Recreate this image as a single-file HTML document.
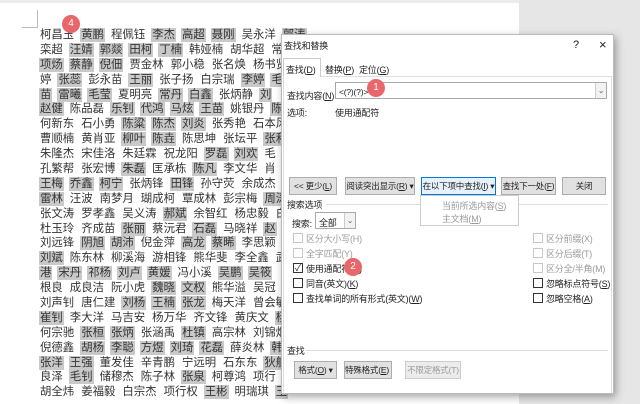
<!DOCTYPE html>
<html><head><meta charset="utf-8"><style>
*{margin:0;padding:0;box-sizing:border-box}
body{width:640px;height:404px;overflow:hidden;background:#fff;position:relative;font-family:"Liberation Sans","Noto Sans CJK SC",sans-serif;color:#222}
.gray{position:absolute;left:519px;top:0;width:121px;height:404px;background:#e6e6e6}
.topl{position:absolute;left:0;top:0;width:519px;height:3px;background:#ececec}
.rows{position:absolute;left:39px;top:28px;font-size:11.4px;line-height:14.9px;white-space:nowrap;color:#333}
.rows div{height:14.9px}
.rows span{margin-right:5px;padding:0 1px}
.rows b{font-weight:normal;background:#c9c9c9;margin-right:5px;padding:1px 1px}
.badge{position:absolute;width:18px;height:18px;border-radius:50%;background:#e8676a;color:#fff;font-size:10px;line-height:18px;text-align:center}
.dlg{position:absolute;left:281px;top:34px;width:333px;height:360px;background:#fff;border:1px solid #bbb;box-shadow:2px 3px 8px rgba(0,0,0,.35);font-size:9px;color:#222;letter-spacing:-0.2px}
.dlg div{white-space:nowrap}
.a{position:absolute}
.btn{position:absolute;height:18px;background:#e1e1e1;border:1px solid #adadad;text-align:center;line-height:16px;font-size:8.5px;overflow:hidden}
.cb{position:absolute;width:10px;height:10px;border:1px solid #333;background:#fff}
.dis{color:#9a9a9a}
.cb.dis{border-color:#c8c8c8}
</style></head><body>
<div class="topl"></div>
<div class="gray"></div>
<div style="position:absolute;left:22px;top:10px;width:16px;height:18px;border-right:1px solid #bbb;border-bottom:1px solid #bbb"></div>
<div class="rows">
<div><span>柯昌玉</span><b>黄鹏</b><span>程佩钰</span><b>李杰</b><b>高超</b><b>聂刚</b><span>吴永洋</span><b>郭涛</b></div>
<div><span>栾超</span><b>汪婧</b><b>郭燚</b><b>田柯</b><b>丁楠</b><span>韩娅楠</span><span>胡华超</span><span>常</span></div>
<div><b>项炀</b><b>蔡静</b><b>倪佃</b><span>贾金林</span><span>郭小稳</span><span>张名焕</span><span>杨书贤</span></div>
<div><span>婷</span><b>张蕊</b><span>彭永苗</span><b>王丽</b><span>张子扬</span><span>白宗瑞</span><b>李婷</b><b>毛</b></div>
<div><b>苗</b><b>雷曦</b><b>毛莹</b><span>夏明亮</span><b>常丹</b><b>白鑫</b><span>张炳静</span><b>刘</b></div>
<div><b>赵健</b><span>陈品磊</span><b>乐钊</b><b>代鸿</b><b>马炫</b><b>王苗</b><span>姚银丹</span><b>陈</b></div>
<div><span>何新东</span><span>石小勇</span><b>陈粱</b><b>陈杰</b><b>刘炎</b><span>张秀艳</span><span>石本风</span></div>
<div><span>曹顺楠</span><span>黄肖亚</span><b>柳叶</b><b>陈垚</b><span>陈思坤</span><span>张坛平</span><b>张和</b></div>
<div><span>朱隆杰</span><span>宋佳洛</span><span>朱廷霖</span><span>祝龙阳</span><b>罗磊</b><b>刘欢</b><span>毛</span></div>
<div><span>孔繁帮</span><span>张宏博</span><b>朱磊</b><span>匡承栋</span><b>陈凡</b><span>李文华</span><span>肖</span></div>
<div><b>王梅</b><b>乔鑫</b><b>柯宁</b><span>张炳锋</span><b>田锋</b><span>孙守荧</span><span>余成杰</span></div>
<div><b>雷林</b><span>汪波</span><span>南梦月</span><span>瑚成柯</span><span>覃成林</span><span>彭宗梅</span><b>周涛</b></div>
<div><span>张文涛</span><span>罗孝鑫</span><span>吴义涛</span><b>郝斌</b><span>余智红</span><span>杨忠毅</span><span>白</span></div>
<div><span>杜玉玲</span><span>齐成苗</span><b>张丽</b><span>蔡沅君</span><b>石磊</b><span>马晓祥</span><b>赵</b></div>
<div><span>刘远锋</span><b>阴旭</b><b>胡沛</b><span>倪金萍</span><b>高龙</b><b>蔡晞</b><span>李思颖</span></div>
<div><b>刘斌</b><span>陈东林</span><span>柳溪海</span><span>游相锋</span><span>熊华斐</span><span>李全鑫</span><span>武</span></div>
<div><b>港</b><b>宋丹</b><b>祁杨</b><b>刘卢</b><b>黄媛</b><span>冯小溪</span><b>吴鹏</b><b>吴筱</b></div>
<div><span>根良</span><span>成良洁</span><span>阮小虎</span><b>魏晓</b><b>文权</b><span>熊华溢</span><span>吴冠</span></div>
<div><span>刘声钊</span><span>唐仁建</span><b>刘杨</b><b>王楠</b><b>张龙</b><span>梅天洋</span><span>曾会敏</span></div>
<div><b>崔钊</b><span>李大洋</span><span>马吉安</span><span>杨万华</span><span>齐文锋</span><span>黄庆文</span><b>杨</b></div>
<div><span>何宗驰</span><b>张桓</b><b>张炳</b><span>张涵禹</span><b>杜镇</b><span>高宗林</span><span>刘锦烟</span></div>
<div><span>倪德鑫</span><b>胡杨</b><b>李聪</b><b>方煜</b><b>刘琦</b><b>花磊</b><span>薛炎林</span><b>韩</b></div>
<div><b>张洋</b><b>王强</b><span>董发佳</span><span>辛青鹏</span><span>宁远明</span><span>石东东</span><b>狄航</b></div>
<div><span>良泽</span><b>毛钊</b><span>储穆杰</span><span>陈子林</span><b>张泉</b><span>柯尊鸿</span><span>项行</span></div>
<div><span>胡全炜</span><span>姜福毅</span><span>白宗杰</span><span>项行权</span><b>王彬</b><span>明瑞琪</span><b>王</b></div>
</div>
<div class="badge" style="left:62px;top:15px">4</div>

<div class="dlg">
<div class="a" style="left:2px;top:4px">查找和替换</div>
<div class="a" style="left:291px;top:4px;font-size:11px">?</div>
<div class="a" style="left:317px;top:2px;font-size:13px">×</div>
<div class="a" style="left:1px;top:23px;width:38px;height:19px;border:1px solid #ccc;border-bottom:none;background:#fff;z-index:2"></div>
<div class="a" style="left:4px;top:28px;z-index:3">查找(<u>D</u>)</div>
<div class="a" style="left:43px;top:28px">替换(<u>P</u>)</div>
<div class="a" style="left:77px;top:28px">定位(<u>G</u>)</div>
<div class="a" style="left:1px;top:41px;width:329px;height:317px;border:1px solid #ddd;border-bottom:none"></div>
<div class="a" style="left:5px;top:54px">查找内容(<u>N</u>):</div>
<div class="a" style="left:53px;top:47px;width:272px;height:17px;border:1px solid #aaa"></div>
<div class="a" style="left:57px;top:52px;font-size:8.5px">&lt;(?)(?)&gt;</div>
<div class="a" style="left:313px;top:48px;width:11px;height:15px;border-left:1px solid #ccc;background:#f2f2f2;font-size:8px;text-align:center;line-height:15px;color:#666">⌄</div>
<div class="a" style="left:5px;top:71px">选项:</div>
<div class="a" style="left:53px;top:71px">使用通配符</div>
<div class="btn" style="left:7px;top:142px;width:48px">&lt;&lt; 更少(<u>L</u>)</div>
<div class="btn" style="left:63px;top:142px;width:70px">阅读突出显示(<u>R</u>) ▾</div>
<div class="btn" style="left:139px;top:142px;width:75px;background:#e5f1fb;border-color:#0078d7">在以下项中查找(<u>I</u>) ▾</div>
<div class="btn" style="left:219px;top:142px;width:55px">查找下一处(<u>F</u>)</div>
<div class="btn" style="left:280px;top:142px;width:44px">关闭</div>
<div class="a" style="left:5px;top:163px">搜索选项</div>
<div class="a" style="left:44px;top:169px;width:282px;height:1px;background:#ddd"></div>
<div class="a" style="left:138px;top:160px;width:99px;height:31px;background:#fff;border:1px solid #ccc;z-index:4"></div>
<div class="a dis" style="left:160px;top:164px;z-index:5">当前所选内容(<u>S</u>)</div>
<div class="a dis" style="left:160px;top:177px;z-index:5">主文档(<u>M</u>)</div>
<div class="a" style="left:10px;top:182px">搜索:</div>
<div class="a" style="left:33px;top:177px;width:41px;height:17px;border:1px solid #aaa"></div>
<div class="a" style="left:37px;top:181px">全部</div>
<div class="a" style="left:62px;top:178px;width:11px;height:15px;border-left:1px solid #ccc;background:#f2f2f2;font-size:8px;text-align:center;line-height:15px;color:#666">⌄</div>

<div class="cb dis" style="left:11px;top:198px"></div><div class="a dis" style="left:24px;top:197px">区分大小写(H)</div>
<div class="cb dis" style="left:11px;top:213px"></div><div class="a dis" style="left:24px;top:212px">全字匹配(Y)</div>
<div class="cb" style="left:11px;top:228px;font-size:9px;line-height:8px;text-align:center">✓</div><div class="a" style="left:24px;top:227px">使用通配符(<u>U</u>)</div>
<div class="cb" style="left:11px;top:243px"></div><div class="a" style="left:24px;top:242px">同音(英文)(<u>K</u>)</div>
<div class="cb" style="left:11px;top:258px"></div><div class="a" style="left:24px;top:257px">查找单词的所有形式(英文)(<u>W</u>)</div>

<div class="cb dis" style="left:251px;top:198px"></div><div class="a dis" style="left:264px;top:197px">区分前缀(X)</div>
<div class="cb dis" style="left:251px;top:213px"></div><div class="a dis" style="left:264px;top:212px">区分后缀(T)</div>
<div class="cb dis" style="left:251px;top:228px"></div><div class="a dis" style="left:264px;top:227px">区分全/半角(M)</div>
<div class="cb" style="left:251px;top:243px"></div><div class="a" style="left:264px;top:242px">忽略标点符号(<u>S</u>)</div>
<div class="cb" style="left:251px;top:258px"></div><div class="a" style="left:264px;top:257px">忽略空格(<u>A</u>)</div>

<div class="a" style="left:5px;top:309px">查找</div>
<div class="a" style="left:24px;top:315px;width:302px;height:1px;background:#ddd"></div>
<div class="btn" style="left:12px;top:326px;width:43px">格式(<u>O</u>) ▾</div>
<div class="btn" style="left:62px;top:326px;width:48px">特殊格式(<u>E</u>) ▾</div>
<div class="btn dis" style="left:123px;top:326px;width:56px;border-color:#ccc;background:#ececec">不限定格式(T)</div>
</div>
<div class="badge" style="left:367px;top:79px">1</div>
<div class="badge" style="left:344px;top:258px">2</div>
<div class="badge" style="left:477px;top:205px">3</div>
</body></html>
